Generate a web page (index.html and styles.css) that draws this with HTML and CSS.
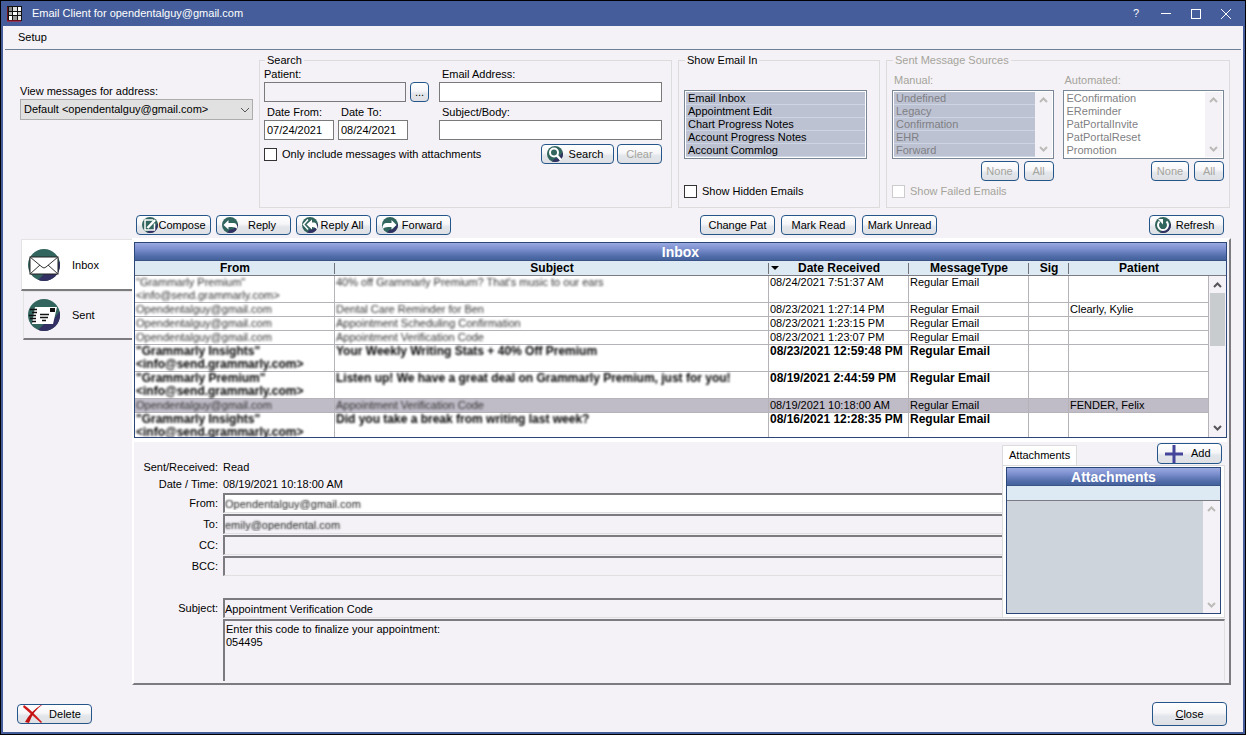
FILE: index.html
```html
<!DOCTYPE html>
<html lang="en">
<head>
    <meta charset="UTF-8">
    <meta name="viewport" content="width=device-width, initial-scale=1.0">
    <title>Email Client</title>
    <link rel="stylesheet" href="styles.css">
</head>
<body>
    <!-- Shared icon shapes -->
    <svg class="icon-defs" aria-hidden="true">
        <clipPath id="disc-clip"><circle cx="16" cy="16" r="16"/></clipPath>
        <symbol id="disc" viewBox="0 0 32 32">
            <g clip-path="url(#disc-clip)">
                <rect width="32" height="32" fill="#33655f"/>
                <path d="M9 32 L16 25 H22 L32 12 V32 Z" fill="#322f62"/>
            </g>
        </symbol>
        <symbol id="arrow-up" viewBox="0 0 9 6"><path d="M1 5 L4.500 1.500 L8 5" fill="none" stroke="currentColor" stroke-width="2"/></symbol>
        <symbol id="arrow-down" viewBox="0 0 9 6"><path d="M1 1 L4.500 4.500 L8 1" fill="none" stroke="currentColor" stroke-width="2"/></symbol>
    </svg>

    <div class="window">
        <header class="titlebar">
            <svg class="app-icon" viewBox="0 0 16 16">
                <rect width="15" height="15" fill="#111"/>
                <path d="M0 1 V15 H14" fill="none" stroke="#d01020" stroke-width="1"/>
                <rect x="2" y="1" width="3" height="4" fill="#888"/><rect x="6" y="1" width="4" height="4" fill="#ddd"/><rect x="11" y="1" width="3" height="4" fill="#fff"/>
                <rect x="2" y="6" width="3" height="3" fill="#bbb"/><rect x="6" y="6" width="4" height="3" fill="#fff"/><rect x="11" y="6" width="3" height="3" fill="#ccc"/>
                <rect x="2" y="10" width="3" height="4" fill="#fff"/><rect x="6" y="10" width="4" height="4" fill="#999"/><rect x="11" y="10" width="3" height="4" fill="#eee"/>
            </svg>
            <span class="title">Email Client for opendentalguy@gmail.com</span>
            <div class="window-controls">
                <button type="button" aria-label="Help">?</button>
                <button type="button" aria-label="Minimize"><svg viewBox="0 0 12 12"><path d="M1 5.500 H11" stroke="#fff"/></svg></button>
                <button type="button" aria-label="Maximize"><svg viewBox="0 0 12 12"><rect x="1.500" y="1.500" width="9" height="9" fill="none" stroke="#fff"/></svg></button>
                <button type="button" aria-label="Close window"><svg viewBox="0 0 12 12"><path d="M1 1 L11 11 M11 1 L1 11" stroke="#fff"/></svg></button>
            </div>
        </header>

        <nav class="menubar">
            <a href="#">Setup</a>
        </nav>

        <section class="filters">
            <div class="address">
                <label for="mailbox">View messages for address:</label>
                <div class="select-wrap">
                    <select id="mailbox">
                        <option>Default &lt;opendentalguy@gmail.com&gt;</option>
                    </select>
                    <svg viewBox="0 0 10 6"><path d="M1 1 L5 5 L9 1" fill="none" stroke="#555"/></svg>
                </div>
            </div>

            <fieldset class="search">
                <legend>Search</legend>
                <div class="search-row">
                    <div class="search-left">
                        <div class="field patient">
                            <label for="patient">Patient:</label>
                            <input type="text" id="patient" readonly>
                        </div>
                        <button type="button" class="btn pick">...</button>
                    </div>
                    <div class="field grow">
                        <label for="email">Email Address:</label>
                        <input type="text" id="email">
                    </div>
                </div>
                <div class="search-row">
                    <div class="search-left">
                        <div class="field date">
                            <label for="date-from">Date From:</label>
                            <input type="text" id="date-from" value="07/24/2021">
                        </div>
                        <div class="field date">
                            <label for="date-to">Date To:</label>
                            <input type="text" id="date-to" value="08/24/2021">
                        </div>
                    </div>
                    <div class="field grow">
                        <label for="subject-body">Subject/Body:</label>
                        <input type="text" id="subject-body">
                    </div>
                </div>
                <div class="search-actions">
                    <label class="check"><input type="checkbox">Only include messages with attachments</label>
                    <button type="button" class="btn icon-btn search-btn">
                        <svg viewBox="0 0 32 32"><use href="#disc"/><circle cx="14" cy="13" r="8" fill="none" stroke="#fff" stroke-width="4"/><path d="M19 18 L28 28" stroke="#fff" stroke-width="5"/></svg>
                        <span>Search</span>
                    </button>
                    <button type="button" class="btn clear-btn" disabled>Clear</button>
                </div>
            </fieldset>

            <fieldset class="show-in">
                <legend>Show Email In</legend>
                <div class="listbox">
                    <select multiple size="5" aria-label="Show Email In">
                        <option selected>Email Inbox</option>
                        <option selected>Appointment Edit</option>
                        <option selected>Chart Progress Notes</option>
                        <option selected>Account Progress Notes</option>
                        <option selected>Account Commlog</option>
                    </select>
                </div>
                <label class="check"><input type="checkbox">Show Hidden Emails</label>
            </fieldset>

            <fieldset class="sources" disabled>
                <legend>Sent Message Sources</legend>
                <div class="source-lists">
                    <div class="source">
                        <label for="manual">Manual:</label>
                        <div class="listbox">
                            <select id="manual" multiple size="5">
                                <option selected>Undefined</option>
                                <option selected>Legacy</option>
                                <option selected>Confirmation</option>
                                <option selected>EHR</option>
                                <option selected>Forward</option>
                            </select>
                            <div class="scrollbar"><svg><use href="#arrow-up"/></svg><svg><use href="#arrow-down"/></svg></div>
                        </div>
                        <div class="source-buttons">
                            <button type="button" class="btn none-btn">None</button>
                            <button type="button" class="btn all-btn">All</button>
                        </div>
                    </div>
                    <div class="source">
                        <label for="automated">Automated:</label>
                        <div class="listbox">
                            <select id="automated" multiple size="5">
                                <option>EConfirmation</option>
                                <option>EReminder</option>
                                <option>PatPortalInvite</option>
                                <option>PatPortalReset</option>
                                <option>Promotion</option>
                            </select>
                            <div class="scrollbar"><svg><use href="#arrow-up"/></svg><svg><use href="#arrow-down"/></svg></div>
                        </div>
                        <div class="source-buttons">
                            <button type="button" class="btn none-btn">None</button>
                            <button type="button" class="btn all-btn">All</button>
                        </div>
                    </div>
                </div>
                <label class="check"><input type="checkbox">Show Failed Emails</label>
            </fieldset>
        </section>

        <div class="toolbar">
            <div class="tool-group">
                <button type="button" class="btn icon-btn">
                    <svg viewBox="0 0 32 32"><use href="#disc"/><path d="M22 6 H6 V26 H25 V13" fill="none" stroke="#fff" stroke-width="3"/><path d="M11 22 L26 6" stroke="#fff" stroke-width="5"/></svg>
                    <span>Compose</span>
                </button>
                <button type="button" class="btn icon-btn">
                    <svg viewBox="0 0 32 32"><use href="#disc"/><path d="M3 16 L13 6 V12 H24 Q31 13 31 24 Q27 20 20 20 H13 V25 Z" fill="#fff"/></svg>
                    <span>Reply</span>
                </button>
                <button type="button" class="btn icon-btn">
                    <svg viewBox="0 0 32 32"><use href="#disc"/><path d="M12 5 L3 15 L12 25" fill="none" stroke="#fff" stroke-width="3"/><path d="M9 15 L20 5 V11 H25 Q31 13 31 26 Q27 20 20 20 V25 Z" fill="#fff"/></svg>
                    <span>Reply All</span>
                </button>
                <button type="button" class="btn icon-btn">
                    <svg viewBox="0 0 32 32"><use href="#disc"/><path d="M29 16 L19 6 V12 H8 Q1 13 1 24 Q5 20 12 20 H19 V25 Z" fill="#fff"/></svg>
                    <span>Forward</span>
                </button>
            </div>
            <div class="tool-group middle">
                <button type="button" class="btn">Change Pat</button>
                <button type="button" class="btn">Mark Read</button>
                <button type="button" class="btn">Mark Unread</button>
            </div>
            <button type="button" class="btn icon-btn refresh">
                <svg viewBox="0 0 32 32"><use href="#disc"/><path d="M9 9 A10 10 0 1 0 23 9" fill="none" stroke="#fff" stroke-width="4"/><path d="M6 4 H16 V15 Z" fill="#fff"/></svg>
                <span>Refresh</span>
            </button>
        </div>

        <main class="mail">
            <div class="folders">
                <button type="button" class="folder active">
                    <svg viewBox="0 0 32 32"><use href="#disc"/><rect x="2" y="8" width="28" height="17" fill="#fff" stroke="#222"/><path d="M2 8 L14 18 Q16 20 18 18 L30 8 M2 25 L12 16 M30 25 L20 16" fill="none" stroke="#333"/></svg>
                    <span>Inbox</span>
                </button>
                <button type="button" class="folder">
                    <svg viewBox="0 0 32 32"><use href="#disc"/><path d="M7 8 H29 L25 25 H4 Z" fill="#fff"/><rect x="22" y="9" width="5" height="4" fill="#111"/><path d="M2 10.500 H9 M4 13.500 H9 M1 16.500 H8 M2 19.500 H8 M4 22.500 H8 M12 15.500 H21 M12 18.500 H20 M14 21.500 H18" stroke="#111" stroke-width="1.500"/></svg>
                    <span>Sent</span>
                </button>
            </div>

            <div class="panel">
                <div class="grid-area">
                    <div class="grid">
                        <h2>Inbox</h2>
                        <table>
                            <thead>
                                <tr>
                                    <th class="col-from">From</th>
                                    <th>Subject</th>
                                    <th class="col-date"><svg viewBox="0 0 8 4"><path d="M0 0 H8 L4 4 Z"/></svg>Date Received</th>
                                    <th class="col-type">MessageType</th>
                                    <th class="col-sig">Sig</th>
                                    <th class="col-patient">Patient</th>
                                    <th class="col-scroll"></th>
                                </tr>
                            </thead>
                            <tbody>
                                <tr>
                                    <td><span class="redacted">"Grammarly Premium"<br>&lt;info@send.grammarly.com&gt;</span></td>
                                    <td><span class="redacted">40% off Grammarly Premium? That's music to our ears</span></td>
                                    <td>08/24/2021 7:51:37 AM</td>
                                    <td>Regular Email</td>
                                    <td></td>
                                    <td></td>
                                    <td class="scroll-cell" rowspan="8">
                                        <div class="scrollbar main-scroll"><svg><use href="#arrow-up"/></svg><div class="thumb"></div><svg><use href="#arrow-down"/></svg></div>
                                    </td>
                                </tr>
                                <tr>
                                    <td><span class="redacted">Opendentalguy@gmail.com</span></td>
                                    <td><span class="redacted">Dental Care Reminder for Ben</span></td>
                                    <td>08/23/2021 1:27:14 PM</td>
                                    <td>Regular Email</td>
                                    <td></td>
                                    <td>Clearly, Kylie</td>
                                </tr>
                                <tr>
                                    <td><span class="redacted">Opendentalguy@gmail.com</span></td>
                                    <td><span class="redacted">Appointment Scheduling Confirmation</span></td>
                                    <td>08/23/2021 1:23:15 PM</td>
                                    <td>Regular Email</td>
                                    <td></td>
                                    <td></td>
                                </tr>
                                <tr>
                                    <td><span class="redacted">Opendentalguy@gmail.com</span></td>
                                    <td><span class="redacted">Appointment Verification Code</span></td>
                                    <td>08/23/2021 1:23:07 PM</td>
                                    <td>Regular Email</td>
                                    <td></td>
                                    <td></td>
                                </tr>
                                <tr class="unread">
                                    <td><span class="redacted">"Grammarly Insights"<br>&lt;info@send.grammarly.com&gt;</span></td>
                                    <td><span class="redacted">Your Weekly Writing Stats + 40% Off Premium</span></td>
                                    <td>08/23/2021 12:59:48 PM</td>
                                    <td>Regular Email</td>
                                    <td></td>
                                    <td></td>
                                </tr>
                                <tr class="unread">
                                    <td><span class="redacted">"Grammarly Premium"<br>&lt;info@send.grammarly.com&gt;</span></td>
                                    <td><span class="redacted">Listen up! We have a great deal on Grammarly Premium, just for you!</span></td>
                                    <td>08/19/2021 2:44:59 PM</td>
                                    <td>Regular Email</td>
                                    <td></td>
                                    <td></td>
                                </tr>
                                <tr class="selected">
                                    <td><span class="redacted">Opendentalguy@gmail.com</span></td>
                                    <td><span class="redacted">Appointment Verification Code</span></td>
                                    <td>08/19/2021 10:18:00 AM</td>
                                    <td>Regular Email</td>
                                    <td></td>
                                    <td>FENDER, Felix</td>
                                </tr>
                                <tr class="unread">
                                    <td><span class="redacted">"Grammarly Insights"<br>&lt;info@send.grammarly.com&gt;</span></td>
                                    <td><span class="redacted">Did you take a break from writing last week?</span></td>
                                    <td>08/16/2021 12:28:35 PM</td>
                                    <td>Regular Email</td>
                                    <td></td>
                                    <td></td>
                                </tr>
                            </tbody>
                        </table>
                    </div>
                </div>

                <div class="message">
                    <div class="headers">
                        <div class="meta"><span class="name">Sent/Received:</span><span>Read</span></div>
                        <div class="meta"><span class="name">Date / Time:</span><span>08/19/2021 10:18:00 AM</span></div>
                        <div class="line"><label class="name" for="from">From:</label><input type="text" id="from" class="white redacted-input" value="Opendentalguy@gmail.com"></div>
                        <div class="line"><label class="name" for="to">To:</label><input type="text" id="to" class="redacted-input" value="emily@opendental.com" readonly></div>
                        <div class="line"><label class="name" for="cc">CC:</label><input type="text" id="cc" readonly></div>
                        <div class="line"><label class="name" for="bcc">BCC:</label><input type="text" id="bcc" readonly></div>
                        <div class="line subject"><label class="name" for="subject">Subject:</label><input type="text" id="subject" value="Appointment Verification Code" readonly></div>
                    </div>
                    <div class="attachments">
                        <div class="attach-top">
                            <span class="attach-tab">Attachments</span>
                            <button type="button" class="btn add-btn">
                                <svg viewBox="0 0 18 18"><path d="M9 0 V18 M0 9 H18" stroke="#44449a" stroke-width="3"/></svg>
                                <span>Add</span>
                            </button>
                        </div>
                        <div class="attach-page">
                            <div class="attach-grid">
                                <h2>Attachments</h2>
                                <div class="attach-head"></div>
                                <div class="attach-body">
                                    <div class="scrollbar"><svg><use href="#arrow-up"/></svg><svg><use href="#arrow-down"/></svg></div>
                                </div>
                            </div>
                        </div>
                    </div>
                </div>
                <textarea class="body-text" aria-label="Message body" readonly>Enter this code to finalize your appointment:
054495</textarea>
            </div>
        </main>

        <footer class="footer">
            <button type="button" class="btn icon-btn delete">
                <svg viewBox="0 0 20 18"><path d="M1 0 Q7 4 19 17 L18 18 Q9 10 0 2 Z" fill="#d01818"/><path d="M19 0 Q10 6 6 18 L2 17 Q8 6 18 0 Z" fill="#c01010"/></svg>
                <span>Delete</span>
            </button>
            <button type="button" class="btn close-btn"><u>C</u>lose</button>
        </footer>
    </div>
</body>
</html>
```

FILE: styles.css
```css
* {
    box-sizing: border-box;
}
body {
    margin: 0;
    font-family: "Liberation Sans", Arial, sans-serif;
    font-size: 11px;
    line-height: 13px;
    color: #000;
    background-color: #f4f2f6;
}
button, input, select, textarea {
    font: inherit;
    color: inherit;
    margin: 0;
}
svg {
    display: block;
    flex: none;
}
.icon-defs {
    position: absolute;
    width: 0;
    height: 0;
}

/* Window frame */
.window {
    display: flex;
    flex-direction: column;
    min-height: 100vh;
    border: 1px solid #000;
    box-shadow: inset 0 0 0 2px #455e9b;
    padding: 0 2px 2px;
}
.titlebar {
    display: flex;
    align-items: center;
    height: 25px;
    padding: 0 2px 0 4px;
    background-color: #455e9b;
    color: #fff;
}
.app-icon {
    width: 16px;
    height: 16px;
}
.title {
    flex: 1;
    padding-left: 9px;
}
.window-controls {
    display: flex;
}
.window-controls button {
    display: flex;
    align-items: center;
    justify-content: center;
    width: 30px;
    height: 22px;
    padding: 0;
    border: none;
    background: none;
}
.window-controls svg {
    width: 12px;
    height: 12px;
}
.menubar {
    height: 24px;
    margin: 0 2px;
    padding: 5px 13px;
    border-bottom: 1px solid #6f7f95;
}
.menubar a {
    color: #000;
    text-decoration: none;
}

/* Buttons */
.btn {
    width: 75px;
    height: 20px;
    padding: 0;
    border: 1px solid #24568a;
    border-radius: 4px;
    background: linear-gradient(#fff 0%, #f6f5f8 45%, #e2e6eb 60%, #dfe0e4 100%);
    white-space: nowrap;
}
.btn:disabled {
    color: #a5a49c;
}
.icon-btn {
    display: flex;
    align-items: center;
    padding: 0 4px 0 5px;
}
.icon-btn svg {
    width: 16px;
    height: 16px;
}
.icon-btn span {
    flex: 1;
    text-align: center;
}

/* Filters */
.filters {
    display: grid;
    grid-template-columns: 233px minmax(0, 1fr) 202px 344px;
    gap: 6px;
    margin-top: 4px;
    padding: 0 13px 0 17px;
}
.address {
    padding-top: 31px;
}
.address label {
    display: block;
    margin-bottom: 1px;
}
.select-wrap {
    position: relative;
}
.select-wrap select {
    appearance: none;
    display: block;
    width: 100%;
    height: 21px;
    padding: 0 3px;
    border: 1px solid #adadad;
    border-radius: 0;
    background-color: #e1e1e1;
}
.select-wrap svg {
    position: absolute;
    top: 8px;
    right: 3px;
    width: 10px;
    height: 6px;
}
fieldset {
    margin: 0;
    min-width: 0;
    height: 154px;
    padding: 1px 5px 9px 5px;
    border: 1px solid #dcdcdc;
}
legend {
    margin-left: 1px;
    padding: 0 2px;
}
.search {
    padding-right: 9px;
    padding-left: 4px;
}
.search-row {
    display: flex;
    gap: 10px;
    margin-bottom: 4px;
}
.search-left {
    display: flex;
    align-items: flex-end;
    gap: 4px;
    width: 165px;
}
.field label {
    display: block;
    margin-bottom: 1px;
    padding-left: 3px;
}
.field input {
    display: block;
    width: 100%;
    height: 20px;
    padding: 0 2px;
    border: 1px solid #7a7a7a;
    background-color: #fff;
}
.field input:read-only {
    background-color: #f4f2f6;
}
.field.patient {
    flex: 1;
}
.field.patient label {
    padding-left: 0;
}
.field.date {
    width: 70px;
}
.grow {
    flex: 1;
}
.pick {
    width: 19px;
}
.search-actions {
    display: flex;
    align-items: center;
    gap: 3px;
}
.search-actions .check {
    flex: 1;
}
.search-btn {
    width: 73px;
}
.clear-btn {
    width: 45px;
}
.check {
    display: flex;
    align-items: center;
    gap: 5px;
}
.check input {
    appearance: none;
    width: 13px;
    height: 13px;
    border: 1px solid #333;
    background-color: #fff;
}
.listbox {
    display: flex;
    height: 69px;
    padding: 1px;
    border: 1px solid #7a8796;
    background-color: #fff;
}
.listbox select {
    flex: 1;
    min-width: 0;
    height: 65px;
    padding: 0;
    border: none;
    border-radius: 0;
    overflow: hidden;
    background: none;
    outline: none;
    opacity: 1;
}
.listbox option {
    height: 13px;
    min-height: 13px;
    padding: 0 2px;
    line-height: 13px;
}
.listbox option:checked {
    color: #000;
    background: linear-gradient(#bcc2d2 12px, #cdd5e4 12px);
}
.scrollbar {
    display: flex;
    flex-direction: column;
    align-items: center;
    justify-content: space-between;
    width: 17px;
    padding: 5px 0;
    background-color: #f4f2f6;
    color: #bdbab8;
}
.scrollbar svg {
    width: 9px;
    height: 6px;
}
.show-in, .sources {
    display: flex;
    flex-direction: column;
    justify-content: space-between;
}
.show-in .listbox {
    margin-top: 22px;
    margin-right: 7px;
}
.sources {
    color: #a5a49c;
}
.sources .listbox option {
    color: #7f7f84;
}
.sources .check input {
    border-color: #ccc;
}
.source-lists {
    display: flex;
    gap: 9px;
    padding-top: 6px;
}
.source {
    flex: 1;
}
.source label {
    display: block;
    margin-bottom: 3px;
    padding-left: 2px;
}
.source-buttons {
    display: flex;
    justify-content: flex-end;
    gap: 5px;
    margin-top: 2px;
}
.none-btn {
    width: 38px;
}
.all-btn {
    width: 30px;
}

/* Toolbar */
.toolbar {
    display: flex;
    margin-top: 7px;
    padding: 0 19px 0 133px;
}
.tool-group {
    display: flex;
    gap: 5px;
}
.tool-group.middle {
    gap: 6px;
    margin-left: 249px;
}
.refresh {
    margin-left: auto;
}

/* Folder tabs and main panel */
.mail {
    display: flex;
    margin-top: 3px;
    padding: 0 12px 0 18px;
}
.folders {
    width: 111px;
    padding-top: 1px;
}
.folder {
    display: flex;
    align-items: center;
    gap: 12px;
    width: 109px;
    height: 49px;
    margin-left: 2px;
    padding: 0 4px;
    border: 1px solid #e3e3e3;
    border-right: none;
    border-bottom: 2px solid #7c7b80;
    background-color: #f4f2f6;
}
.folder.active {
    width: 111px;
    height: 52px;
    margin-left: 0;
    padding: 1px 6px 0;
    background-color: #fff;
}
.folder svg {
    width: 32px;
    height: 32px;
}
.panel {
    flex: 1;
    min-width: 0;
    border: 2px solid #fff;
    border-right-color: #7c7b80;
    border-bottom-color: #7c7b80;
    padding: 0 2px 2px 0;
}
.grid-area {
    padding: 2px 0 4px;
    background-color: #fff;
}
.grid {
    height: 196px;
    border: 1px solid #2b4678;
    overflow: hidden;
}
h2 {
    margin: 0;
    height: 18px;
    border-bottom: 1px solid #3a5386;
    background: linear-gradient(#9aa9e0, #8193d2 30%, #4f6ba8 80%, #46629c);
    color: #fff;
    font-size: 14px;
    line-height: 18px;
    text-align: center;
}
table {
    width: 100%;
    table-layout: fixed;
    border-collapse: separate;
    border-spacing: 0;
}
th {
    position: relative;
    height: 15px;
    padding: 0;
    border-bottom: 1px solid #7b7b84;
    background: #dde9f3 linear-gradient(#70727a, #70727a) right 0 top 2px / 1px 11px no-repeat;
    font-size: 12px;
    line-height: 14px;
}
th.col-patient, th.col-scroll {
    background-image: none;
}
th svg {
    position: absolute;
    top: 5px;
    left: 2px;
    width: 8px;
    height: 4px;
}
.col-from { width: 200px; }
.col-date { width: 140px; }
.col-type { width: 120px; }
.col-sig { width: 40px; }
.col-patient { width: 140px; }
.col-scroll { width: 17px; }
td {
    height: 14px;
    padding: 0 1px;
    border-right: 1px solid #b5b3b8;
    border-bottom: 1px solid #b5b3b8;
    background-color: #fff;
    vertical-align: top;
    white-space: nowrap;
}
.unread td {
    font-size: 12px;
    font-weight: bold;
}
.selected td {
    background-color: #bfbbc7;
}
.redacted {
    display: inline-block;
    vertical-align: top;
    color: #333;
    filter: blur(1px);
}
.unread .redacted {
    color: #000;
}
td.scroll-cell {
    padding: 0;
    border: none;
    background-color: #f4f2f6;
}
.main-scroll {
    height: 161px;
    justify-content: flex-start;
    padding: 6px 0;
    color: #55555a;
}
.main-scroll .thumb {
    width: 15px;
    height: 53px;
    margin-top: 5px;
    margin-bottom: auto;
    background-color: #c9cccf;
}

/* Message details */
.message {
    display: flex;
}
.headers {
    flex: 1;
    min-width: 0;
    padding-top: 17px;
}
.name {
    width: 84px;
    text-align: right;
}
.meta {
    display: flex;
    align-items: center;
    gap: 5px;
    height: 17px;
}
.line {
    display: flex;
    align-items: center;
    gap: 5px;
    margin-bottom: 1px;
}
.line.subject {
    margin-top: 22px;
}
.line input {
    flex: 1;
    min-width: 0;
    height: 20px;
    padding: 0;
    border: 2px solid #7c7b80;
    border-right: none;
    border-bottom: 1px solid #e0e0e0;
    background-color: #f4f2f6;
}
.line input.white {
    background-color: #fff;
}
.line input.redacted-input {
    color: transparent;
    text-shadow: 0 0 2px #222;
}
.attachments {
    display: flex;
    flex-direction: column;
    width: 223px;
    margin: 0 2px 1px 0;
}
.attach-top {
    display: flex;
    justify-content: space-between;
    height: 23px;
    padding-top: 1px;
}
.attach-tab {
    height: 22px;
    margin-top: 2px;
    padding: 3px 6px;
    border: 1px solid #dcdcdc;
    border-bottom: none;
    background-color: #fff;
}
.add-btn {
    display: flex;
    align-items: center;
    gap: 8px;
    width: 65px;
    height: 21px;
    margin-right: 3px;
    padding-left: 7px;
}
.add-btn svg {
    width: 18px;
    height: 18px;
}
.attach-page {
    flex: 1;
    display: flex;
    padding: 1px 3px 3px;
    border: 1px solid #dcdcdc;
    background-color: #fff;
}
.attach-grid {
    flex: 1;
    display: flex;
    flex-direction: column;
    border: 1px solid #2b4678;
}
.attach-head {
    height: 15px;
    border-bottom: 1px solid #7b7b84;
    background-color: #dde9f3;
}
.attach-body {
    flex: 1;
    display: flex;
    justify-content: flex-end;
    background-color: #ced4dc;
}
.body-text {
    display: block;
    width: calc(100% - 91px);
    height: 62px;
    margin-left: 89px;
    padding: 2px 1px;
    border: 2px solid #7c7b80;
    border-right: 1px solid #e0e0e0;
    border-bottom: none;
    background-color: #f4f2f6;
    resize: none;
}

/* Footer */
.footer {
    display: flex;
    justify-content: space-between;
    align-items: center;
    margin-top: auto;
    padding: 0 16px 6px 14px;
}
.delete svg {
    width: 20px;
    height: 18px;
}
.close-btn {
    height: 24px;
}
```
